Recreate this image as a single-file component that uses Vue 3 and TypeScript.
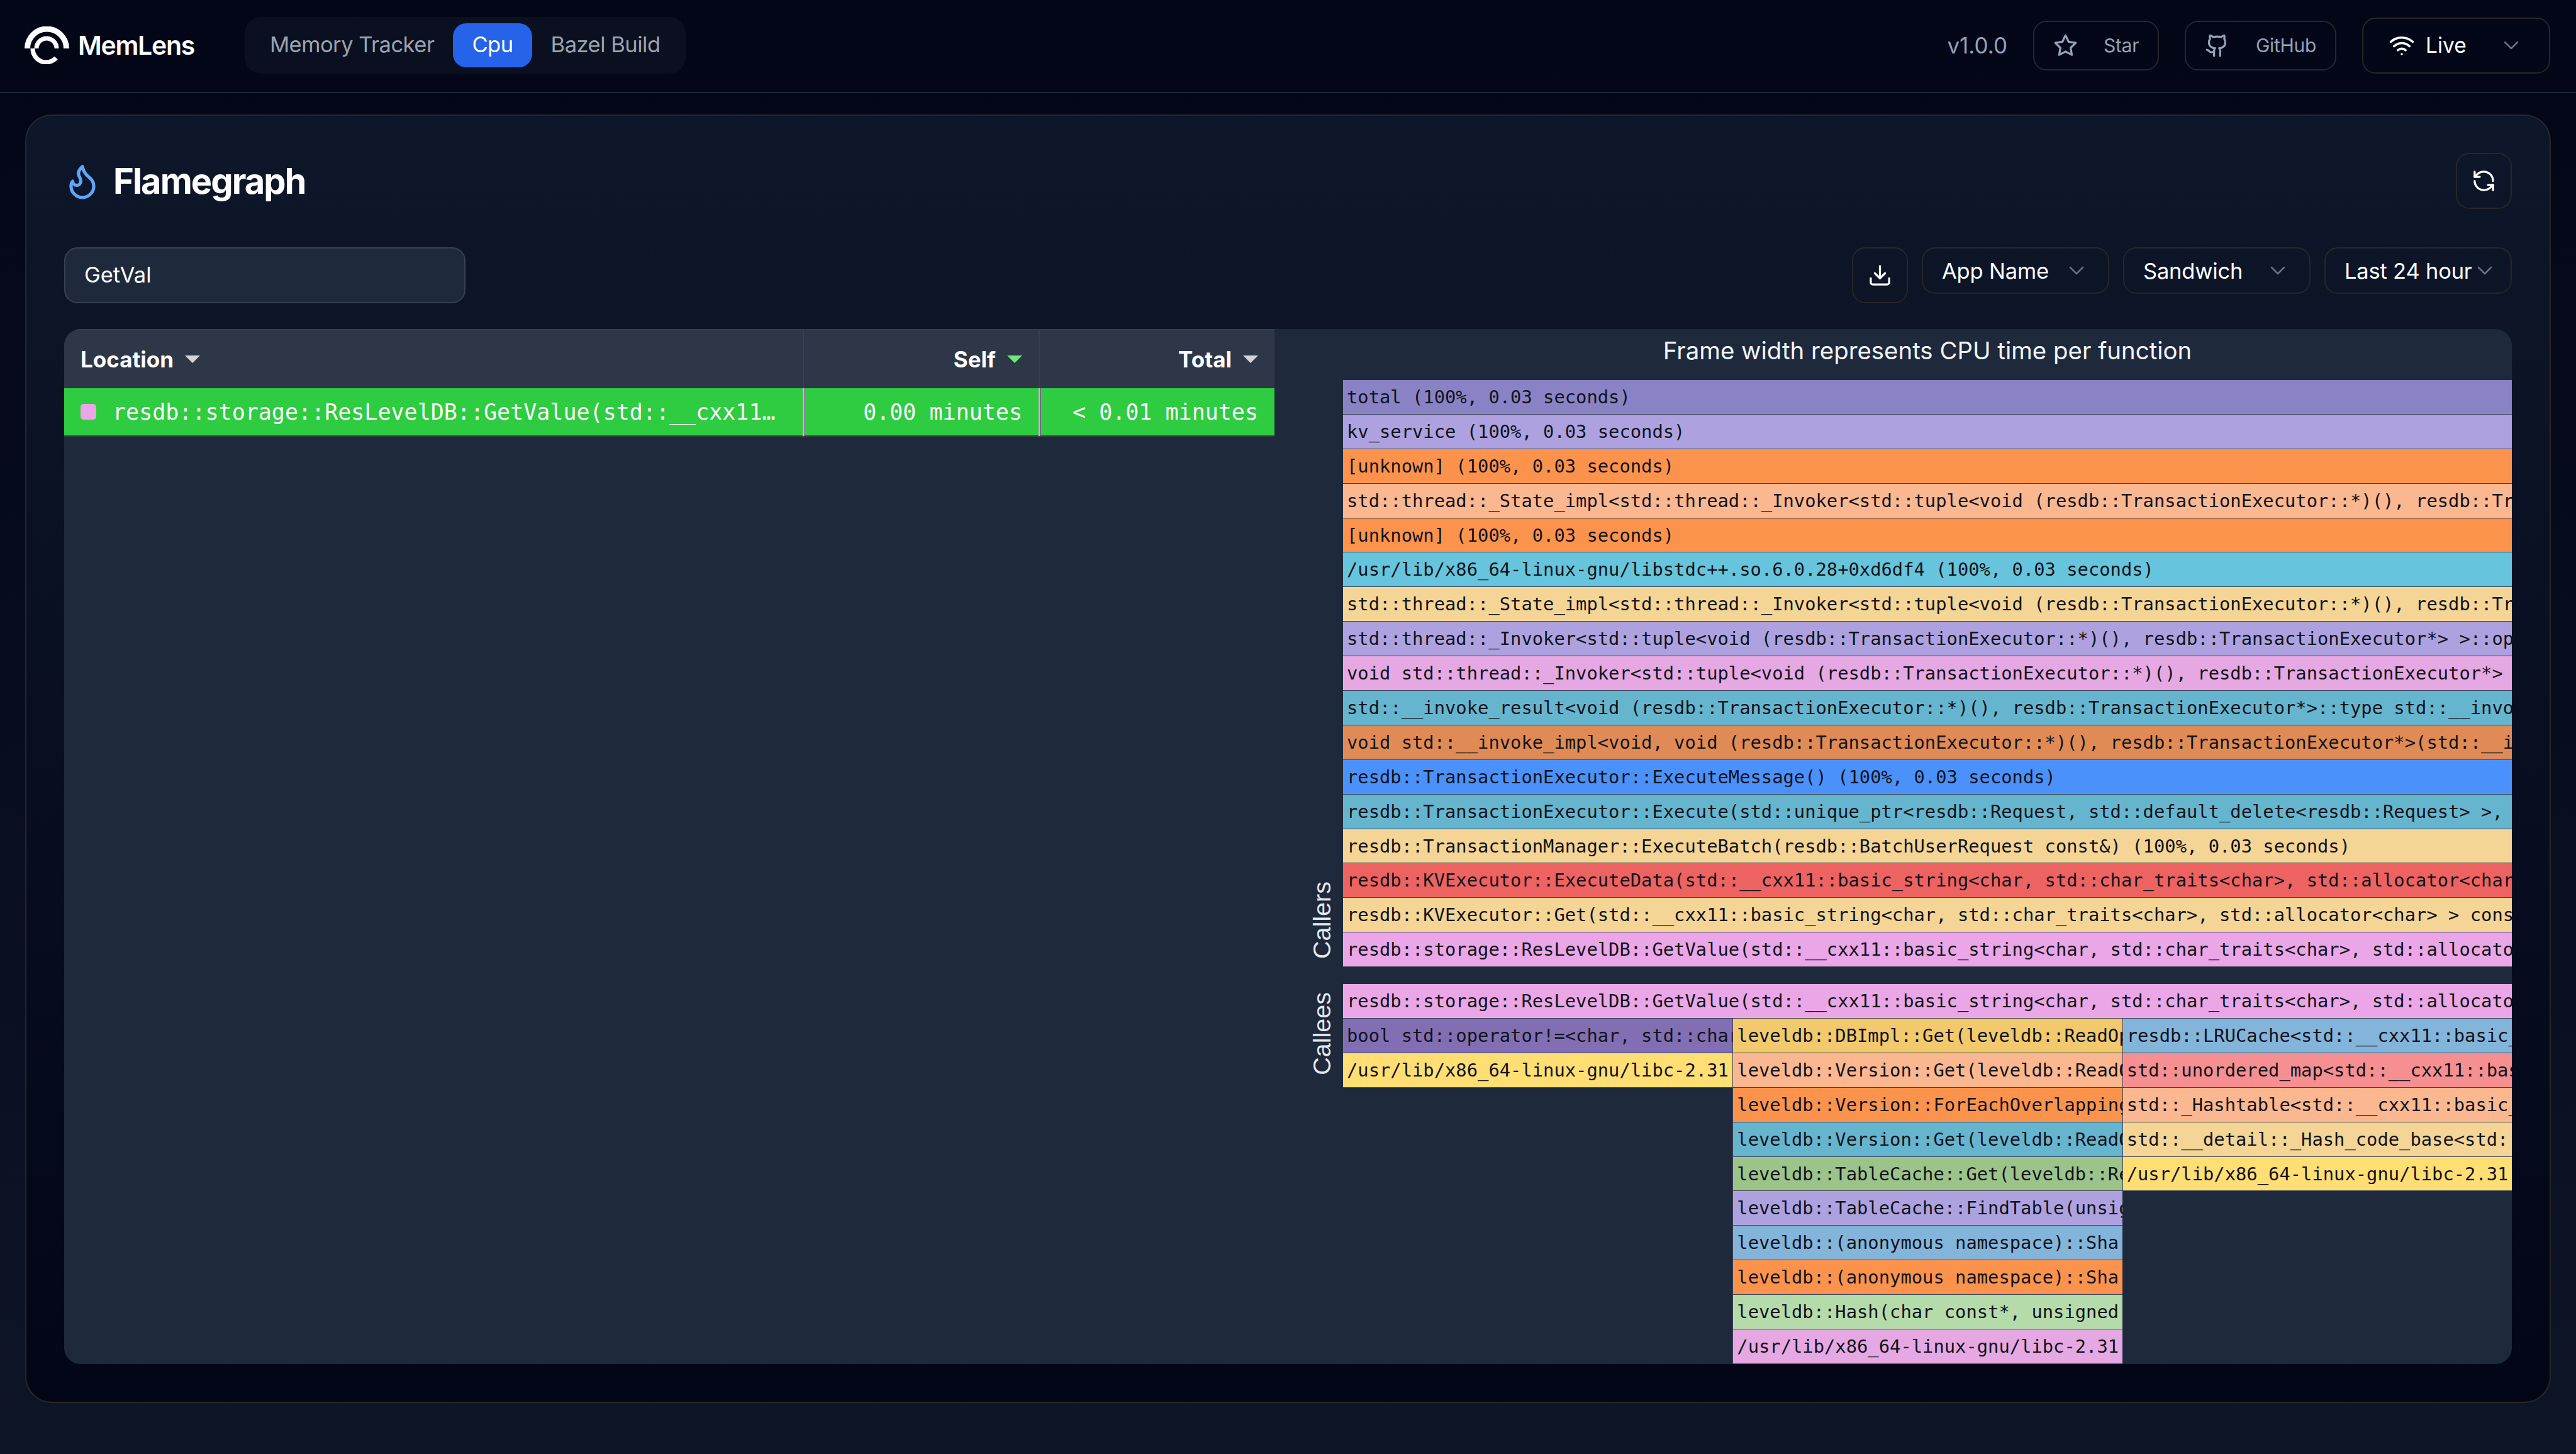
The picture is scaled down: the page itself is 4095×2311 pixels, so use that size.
<script setup lang="ts">
interface Frame {
  label: string;
  color: string;
}

const navItems = ['Memory Tracker', 'Cpu', 'Bazel Build'];
const selects = ['App Name', 'Sandwich', 'Last 24 hour'];

const lilac = '#ada2df';
const orange = '#fc934d';
const peach = '#fbb78f';
const sand = '#f4d595';
const teal = '#66b5cf';
const pink = '#eaa6e6';
const mauve = '#e6a8e3';
const sky = '#83b4da';
const yellow = '#ffde74';

const basicString = 'std::__cxx11::basic_string<char, std::char_traits<char>, std::allocator<char> >';
const invokerTuple = 'std::tuple<void (resdb::TransactionExecutor::*)(), resdb::TransactionExecutor*>';

const callers: Frame[] = [
  { label: 'total (100%, 0.03 seconds)', color: '#8983c6' },
  { label: 'kv_service (100%, 0.03 seconds)', color: lilac },
  { label: '[unknown] (100%, 0.03 seconds)', color: orange },
  { label: `std::thread::_State_impl<std::thread::_Invoker<${invokerTuple} > >::_M_run()`, color: peach },
  { label: '[unknown] (100%, 0.03 seconds)', color: orange },
  { label: '/usr/lib/x86_64-linux-gnu/libstdc++.so.6.0.28+0xd6df4 (100%, 0.03 seconds)', color: '#66c5dc' },
  { label: `std::thread::_State_impl<std::thread::_Invoker<${invokerTuple} > >::_M_run()`, color: sand },
  { label: `std::thread::_Invoker<${invokerTuple} >::operator()()`, color: lilac },
  { label: `void std::thread::_Invoker<${invokerTuple} >::_M_invoke<0ul, 1ul>()`, color: mauve },
  { label: 'std::__invoke_result<void (resdb::TransactionExecutor::*)(), resdb::TransactionExecutor*>::type std::__invoke<void>()', color: teal },
  { label: 'void std::__invoke_impl<void, void (resdb::TransactionExecutor::*)(), resdb::TransactionExecutor*>(std::__invoke_memfun_deref)', color: '#e08b55' },
  { label: 'resdb::TransactionExecutor::ExecuteMessage() (100%, 0.03 seconds)', color: '#4a91fb' },
  { label: 'resdb::TransactionExecutor::Execute(std::unique_ptr<resdb::Request, std::default_delete<resdb::Request> >, bool)', color: teal },
  { label: 'resdb::TransactionManager::ExecuteBatch(resdb::BatchUserRequest const&) (100%, 0.03 seconds)', color: sand },
  { label: `resdb::KVExecutor::ExecuteData(${basicString} const&)`, color: '#ec6361' },
  { label: `resdb::KVExecutor::Get(${basicString} const&)`, color: sand },
  { label: `resdb::storage::ResLevelDB::GetValue(${basicString} const&)`, color: pink },
];

const calleeColumns: Frame[][] = [
  [
    { label: 'bool std::operator!=<char, std::char_traits<char> >', color: '#826fb3' },
    { label: '/usr/lib/x86_64-linux-gnu/libc-2.31', color: yellow },
  ],
  [
    { label: 'leveldb::DBImpl::Get(leveldb::ReadOptions const&)', color: '#f2c96d' },
    { label: 'leveldb::Version::Get(leveldb::ReadOptions const&)', color: peach },
    { label: 'leveldb::Version::ForEachOverlapping(leveldb::Slice)', color: orange },
    { label: 'leveldb::Version::Get(leveldb::ReadOptions const&)', color: teal },
    { label: 'leveldb::TableCache::Get(leveldb::ReadOptions const&)', color: '#9cc38a' },
    { label: 'leveldb::TableCache::FindTable(unsigned long)', color: lilac },
    { label: 'leveldb::(anonymous namespace)::Sha', color: sky },
    { label: 'leveldb::(anonymous namespace)::Sha', color: orange },
    { label: 'leveldb::Hash(char const*, unsigned', color: '#b6dbab' },
    { label: '/usr/lib/x86_64-linux-gnu/libc-2.31', color: mauve },
  ],
  [
    { label: 'resdb::LRUCache<std::__cxx11::basic_string<char>', color: sky },
    { label: 'std::unordered_map<std::__cxx11::basic_string<char>', color: '#f58f91' },
    { label: 'std::_Hashtable<std::__cxx11::basic_string<char>', color: peach },
    { label: 'std::__detail::_Hash_code_base<std:', color: sand },
    { label: '/usr/lib/x86_64-linux-gnu/libc-2.31', color: yellow },
  ],
];
</script>

<template>
  <div class="app">
    <header class="topbar">
      <div class="topbar-left">
        <div class="brand">
          <svg class="brand-mark" viewBox="0 0 72 60" fill="none" stroke="#fff">
            <path d="M4.5 35A31 31 0 0 1 66.5 35" stroke-width="9" />
            <path d="M19 35A16 16 0 0 1 51 35" stroke-width="7" />
            <path d="M13 35A21.5 21.5 0 0 0 50.2 50.2" stroke-width="7" />
          </svg>
          <span class="brand-name">MemLens</span>
        </div>
        <nav class="tabs">
          <span v-for="item in navItems" :key="item" class="tab" :class="{ active: item === 'Cpu' }">{{ item }}</span>
        </nav>
      </div>
      <div class="topbar-right">
        <span class="version">v1.0.0</span>
        <button class="ghost-btn star">
          <svg class="icon" viewBox="0 0 24 24"><path d="M12 2l3.09 6.26L22 9.27l-5 4.87 1.18 6.88L12 17.77l-6.18 3.25L7 14.14 2 9.27l6.91-1.01L12 2z" /></svg>
          Star
        </button>
        <button class="ghost-btn github">
          <svg class="icon" viewBox="0 0 24 24">
            <path d="M15 22v-4a4.8 4.8 0 0 0-1-3.5c3 0 6-2 6-5.5.08-1.25-.27-2.48-1-3.5.28-1.15.28-2.35 0-3.5 0 0-1 0-3 1.5-2.64-.5-5.36-.5-8 0C6 2 5 2 5 2c-.3 1.15-.3 2.35 0 3.5A5.403 5.403 0 0 0 4 9c0 3.5 3 5.5 6 5.5-.39.49-.68 1.05-.85 1.65-.17.6-.22 1.23-.15 1.85v4" />
            <path d="M9 18c-4.51 2-5-2-7-2" />
          </svg>
          GitHub
        </button>
        <button class="live-btn">
          <svg class="wifi" viewBox="0 0 24 24">
            <path d="M12 20h.01" />
            <path d="M2 8.82a15 15 0 0 1 20 0" />
            <path d="M5 12.859a10 10 0 0 1 14 0" />
            <path d="M8.5 16.429a5 5 0 0 1 7 0" />
          </svg>
          <span>Live</span>
          <svg class="chevron" viewBox="0 0 24 24"><path d="m6 9 6 6 6-6" /></svg>
        </button>
      </div>
    </header>

    <main class="content">
      <section class="panel">
        <div class="panel-head">
          <h1 class="panel-title">
            <svg class="flame" viewBox="0 0 24 24">
              <path d="M8.5 14.5A2.5 2.5 0 0 0 11 12c0-1.38-.5-2-1-3-1.072-2.143-.224-4.054 2-6 .5 2.5 2 4.9 4 6.5 2 1.6 3 3.5 3 5.5a7 7 0 1 1-14 0c0-1.153.433-2.294 1-3a2.5 2.5 0 0 0 2.5 2.5z" />
            </svg>
            Flamegraph
          </h1>
          <button class="square-btn">
            <svg class="icon-white" viewBox="0 0 24 24">
              <path d="M21 12a9 9 0 0 0-9-9 9.75 9.75 0 0 0-6.74 2.74L3 8" />
              <path d="M3 3v5h5" />
              <path d="M3 12a9 9 0 0 0 9 9 9.75 9.75 0 0 0 6.74-2.74L21 16" />
              <path d="M16 16h5v5" />
            </svg>
          </button>
        </div>

        <div class="toolbar">
          <input class="search" value="GetVal" readonly />
          <div class="filters">
            <button class="square-btn">
              <svg class="icon-white" viewBox="0 0 24 24">
                <path d="M21 15v4a2 2 0 0 1-2 2H5a2 2 0 0 1-2-2v-4" />
                <path d="M7 10l5 5 5-5" />
                <path d="M12 15V3" />
              </svg>
            </button>
            <button v-for="name in selects" :key="name" class="select">
              <span>{{ name }}</span>
              <svg class="chevron" viewBox="0 0 24 24"><path d="m6 9 6 6 6-6" /></svg>
            </button>
          </div>
        </div>

        <div class="graph">
          <div class="table">
            <div class="th loc">
              Location
              <svg class="sort" viewBox="0 0 24 12"><path d="M0 0h24L12 12z" fill="#d4d4d8" /></svg>
            </div>
            <div class="th num">
              Self
              <svg class="sort" viewBox="0 0 24 12"><path d="M0 0h24L12 12z" fill="#6ee77a" /></svg>
            </div>
            <div class="th num">
              Total
              <svg class="sort" viewBox="0 0 24 12"><path d="M0 0h24L12 12z" fill="#d4d4d8" /></svg>
            </div>
            <div class="td loc">
              <i class="swatch"></i>
              <span class="ellipsis">resdb::storage::ResLevelDB::GetValue(std::__cxx11::basic_string&lt;char, std::char_traits&lt;char&gt; &gt;)</span>
            </div>
            <div class="td num">0.00 minutes</div>
            <div class="td num">&lt; 0.01 minutes</div>
          </div>

          <div class="flames">
            <div class="flames-title">Frame width represents CPU time per function</div>
            <div class="stack callers">
              <div class="side-label"><span>Callers</span></div>
              <div class="rows">
                <div v-for="(f, i) in callers" :key="i" class="frame" :style="{ background: f.color }">{{ f.label }}</div>
              </div>
            </div>
            <div class="stack callees">
              <div class="side-label"><span>Callees</span></div>
              <div class="rows">
                <div class="frame" :style="{ background: pink }">resdb::storage::ResLevelDB::GetValue(std::__cxx11::basic_string&lt;char, std::char_traits&lt;char&gt;, std::allocator&lt;char&gt; &gt; const&amp;)</div>
                <div class="callee-cols">
                  <div v-for="(col, c) in calleeColumns" :key="c" class="callee-col">
                    <div v-for="(f, i) in col" :key="i" class="frame" :style="{ background: f.color }">{{ f.label }}</div>
                  </div>
                </div>
              </div>
            </div>
          </div>
        </div>
      </section>
    </main>
  </div>
</template>

<style>
body {
  background: #020617;
}
</style>

<style scoped>
.app {
  min-height: 100vh;
  display: flex;
  flex-direction: column;
  background: linear-gradient(180deg, #020617 0%, #0e1526 100%);
  font-family: Inter, "Liberation Sans", sans-serif;
  color: #fff;
}

button {
  font-family: inherit;
  background: transparent;
  color: inherit;
  cursor: pointer;
}

svg {
  fill: none;
  stroke: currentColor;
  stroke-linecap: round;
  stroke-linejoin: round;
  flex: none;
}

/* top bar */
.topbar {
  height: 148px;
  box-sizing: border-box;
  flex: none;
  display: flex;
  align-items: center;
  justify-content: space-between;
  padding: 0 41px 2px 39px;
  border-bottom: 2px solid #1e293b;
}

.topbar-left,
.topbar-right,
.brand {
  display: flex;
  align-items: center;
}

.brand {
  gap: 13px;
  margin-right: 80px;
}

.brand-mark {
  width: 72px;
  height: 60px;
  stroke-linecap: butt;
}

.brand-name {
  font-size: 41px;
  line-height: 50px;
  font-weight: 600;
  letter-spacing: -1.3px;
}

.tabs {
  display: flex;
  padding: 10px;
  border-radius: 26px;
  background: #0a1020;
}

.tab {
  height: 70px;
  line-height: 68px;
  padding: 0 30px;
  border-radius: 21px;
  font-size: 34.5px;
  letter-spacing: -0.5px;
  color: #9ca3af;
}

.tab.active {
  background: #2563eb;
  color: #fff;
}

.topbar-right {
  gap: 41px;
}

.version {
  font-size: 35px;
  color: #94a3b8;
}

.ghost-btn {
  height: 79px;
  display: flex;
  align-items: center;
  box-sizing: border-box;
  padding: 0 30px;
  border: 2px solid #27272a;
  border-radius: 21px;
  font-size: 30px;
  letter-spacing: -0.3px;
  color: #94a3b8;
}

.star {
  width: 200px;
  gap: 41px;
}

.github {
  width: 241px;
  gap: 42px;
}

.icon {
  width: 39px;
  height: 39px;
  stroke-width: 2;
}

.live-btn {
  width: 299px;
  height: 89px;
  box-sizing: border-box;
  display: flex;
  align-items: center;
  padding: 0 40px;
  border: 2px solid #27272a;
  border-radius: 21px;
  font-size: 33.5px;
  color: #fff;
}

.wifi {
  width: 42px;
  height: 42px;
  stroke-width: 2;
  margin-right: 17px;
}

.live-btn .chevron {
  margin-left: auto;
}

.chevron {
  width: 40px;
  height: 40px;
  stroke-width: 1.5;
  color: #6b7280;
}

/* main panel */
.content {
  flex: 1;
  min-width: 0;
  display: flex;
  padding: 34px 40px 81px;
}

.panel {
  flex: 1;
  min-width: 0;
  box-sizing: border-box;
  display: flex;
  flex-direction: column;
  padding: 59px 60px 60px;
  border: 2px solid #27272a;
  border-radius: 42px;
  background: linear-gradient(180deg, #0e1729 0%, #020617 100%);
}

.panel-head {
  display: flex;
  align-items: center;
  justify-content: space-between;
  margin-bottom: 61px;
}

.panel-title {
  display: flex;
  align-items: center;
  gap: 18px;
  margin: 0 0 0 -2px;
  font-size: 56px;
  line-height: 62px;
  font-weight: 700;
  letter-spacing: -0.035em;
}

.flame {
  width: 62px;
  height: 62px;
  stroke-width: 2;
  color: #60a5fa;
}

.square-btn {
  width: 89px;
  height: 89px;
  padding: 0;
  box-sizing: border-box;
  display: flex;
  align-items: center;
  justify-content: center;
  border: 2px solid #27272a;
  border-radius: 21px;
}

.icon-white {
  width: 39px;
  height: 39px;
  stroke-width: 2;
  color: #fff;
}

.toolbar {
  display: flex;
  align-items: flex-start;
  justify-content: space-between;
  margin-bottom: 41px;
}

.search {
  width: 638px;
  height: 89px;
  box-sizing: border-box;
  padding: 0 30px 3px;
  border: 2px solid #374151;
  border-radius: 21px;
  outline: none;
  background: #1e293b;
  color: #fff;
  font-family: inherit;
  font-size: 34.5px;
}

.filters {
  display: flex;
  align-items: flex-start;
  gap: 22px;
}

.select {
  width: 298px;
  height: 74px;
  box-sizing: border-box;
  display: flex;
  align-items: center;
  justify-content: space-between;
  padding: 0 30px 0 30px;
  border: 2px solid #27272a;
  border-radius: 21px;
  font-size: 34.5px;
  letter-spacing: -0.2px;
  color: #fff;
  white-space: nowrap;
}

/* sandwich view */
.graph {
  flex: 1;
  min-width: 0;
  display: flex;
  overflow: hidden;
  border-radius: 26px;
  background: #1e293b;
}

.table {
  width: 1924px;
  flex: none;
  display: grid;
  grid-template-columns: 1174px 375px 375px;
  grid-template-rows: 94px 77px;
  align-content: start;
}

.th {
  display: flex;
  align-items: center;
  gap: 18px;
  padding: 0 26px;
  background: #2d3748;
  border-top: 2px solid #3a3f4a;
  font-size: 35px;
  font-weight: 700;
  box-sizing: border-box;
}

.th.num {
  justify-content: flex-end;
  border-left: 2px solid #3a3f4a;
}

.sort {
  width: 24px;
  height: 12px;
  stroke: none;
}

.td {
  display: flex;
  align-items: center;
  box-sizing: border-box;
  background: #2ecc40;
  border-bottom: 2px solid #3a3f4a;
  font-family: "DejaVu Sans Mono", "Liberation Mono", monospace;
  font-size: 35px;
  min-width: 0;
}

.td.loc {
  padding: 0 30px 0 26px;
}

.td.num {
  justify-content: flex-end;
  padding-right: 26px;
  border-left: 3px solid #e6a8e3;
  box-shadow: inset 1px 0 0 #2d3748;
}

.swatch {
  width: 25px;
  height: 25px;
  flex: none;
  margin-right: 26px;
  border-radius: 5px;
  background: #eaa6e6;
}

.ellipsis {
  min-width: 0;
  white-space: nowrap;
  overflow: hidden;
  text-overflow: ellipsis;
}

.flames {
  flex: 1;
  min-width: 0;
  display: flex;
  flex-direction: column;
}

.flames-title {
  height: 81px;
  box-sizing: border-box;
  padding: 11px 0 0 109px;
  text-align: center;
  font-size: 38.4px;
  line-height: 47px;
  color: #f1f5f9;
}

.stack {
  display: flex;
}

.callers {
  margin-bottom: 27px;
}

.side-label {
  width: 109px;
  flex: none;
  display: flex;
  justify-content: flex-end;
  padding: 13px 14px;
  box-sizing: border-box;
  font-family: "Liberation Sans", Arial, sans-serif;
  font-size: 39.5px;
  line-height: 40px;
  color: #e2e8f0;
}

.side-label span {
  writing-mode: vertical-rl;
  transform: rotate(180deg);
}

.callers .side-label {
  align-items: flex-end;
}

.callees .side-label {
  align-items: flex-start;
}

.rows {
  flex: 1;
  min-width: 0;
}

.frame {
  height: 54.9px;
  box-sizing: border-box;
  display: flex;
  align-items: center;
  padding-left: 6px;
  border-bottom: 1px solid #3b4356;
  overflow: hidden;
  white-space: pre;
  font-family: "DejaVu Sans Mono", "Liberation Mono", monospace;
  font-size: 28.8px;
  color: #10131a;
}

.callee-cols {
  display: grid;
  grid-template-columns: repeat(3, minmax(0, 1fr));
}

.callee-col {
  min-width: 0;
}

.callee-col + .callee-col .frame {
  border-left: 1px solid #3b4356;
}
</style>
